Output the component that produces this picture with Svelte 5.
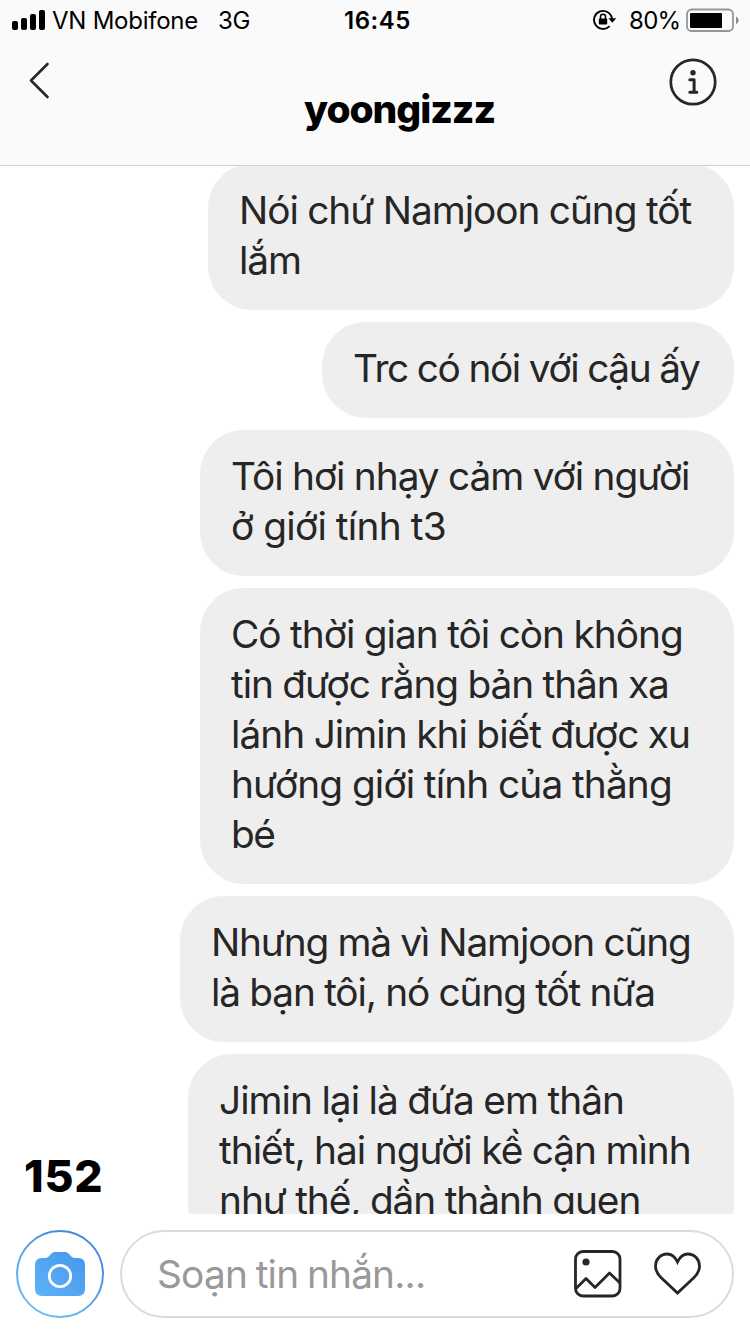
<script>
  const messages = [
    { width: 526, lines: [['Nói chứ Namjoon cũng tốt', -1.02], ['lắm', -1.1]] },
    { width: 412, lines: [['Trc có nói với cậu ấy', -1.4]] },
    { width: 534, lines: [['Tôi hơi nhạy cảm với người', -1.02], ['ở giới tính t3', -0.7]] },
    {
      width: 534,
      lines: [
        ['Có thời gian tôi còn không', -0.98],
        ['tin được rằng bản thân xa', -1.05],
        ['lánh Jimin khi biết được xu', -0.96],
        ['hướng giới tính của thằng', -0.84],
        ['bé', -1.4]
      ]
    },
    { width: 554, lines: [['Nhưng mà vì Namjoon cũng', -1.15], ['là bạn tôi, nó cũng tốt nữa', -1.1]] },
    {
      width: 546,
      lines: [
        ['Jimin lại là đứa em thân', -0.97],
        ['thiết, hai người kề cận mình', -0.98],
        ['như thế, dần thành quen', -1.03]
      ]
    }
  ];
</script>

<div class="screen">
  <header>
    <div class="status">
      <svg class="signal" width="34" height="20" viewBox="0 0 34 20">
        <rect x="0" y="11" width="6" height="9" rx="2" />
        <rect x="9" y="8" width="6" height="12" rx="2" />
        <rect x="18" y="4" width="6" height="16" rx="2" />
        <rect x="27" y="0" width="6" height="20" rx="2" />
      </svg>
      <span class="carrier">VN Mobifone</span>
      <span class="network">3G</span>
      <span class="time">16:45</span>
      <svg class="lock" width="24" height="22" viewBox="0 0 24 22">
        <path d="M19 10A9 9 0 1 0 16.6 17.1" fill="none" stroke="#000" stroke-width="1.9" />
        <path d="M15.4 9.3h7.8l-3.9 4.400z" />
        <rect x="5.800" y="9.500" width="8.400" height="6" rx="1" />
        <path d="M7.500 10V7.800a2.500 2.500 0 0 1 5 0v2.200" fill="none" stroke="#000" stroke-width="1.5" />
      </svg>
      <span class="percent">80%</span>
      <svg class="battery" width="54" height="24" viewBox="0 0 54 24">
        <rect x="1" y="1.500" width="46" height="21.500" rx="4.500" fill="none" stroke="#969696" stroke-width="1.8" />
        <rect x="4" y="5" width="32" height="15" rx="1" />
        <path d="M50 8.500c3.400 1.600 3.400 6 0 7.600z" fill="#8a8a8a" />
      </svg>
    </div>
    <div class="nav">
      <svg class="back" width="24" height="40" viewBox="0 0 24 40">
        <path d="M19.500 3L3 19.500L19.500 36" fill="none" stroke="#262626" stroke-width="2.6" stroke-linecap="round" stroke-linejoin="round" />
      </svg>
      <h1>yoongizzz</h1>
      <svg class="info" width="48" height="48" viewBox="0 0 48 48">
        <circle cx="24" cy="24" r="22.2" fill="none" stroke="#262626" stroke-width="2.7" />
        <circle cx="24" cy="14.8" r="2.7" fill="#262626" />
        <path d="M20.8 21.7h4.3v12.6M20.8 34.3h7" fill="none" stroke="#262626" stroke-width="3" stroke-linecap="round" stroke-linejoin="round" />
      </svg>
    </div>
  </header>

  <main>
    <div class="count">152</div>
    <div class="messages">
      {#each messages as message}
        <div class="bubble" style="width: {message.width}px">
          {#each message.lines as [text, spacing]}
            <div class="line" style="letter-spacing: {spacing}px">{text}</div>
          {/each}
        </div>
      {/each}
    </div>
  </main>

  <footer>
    <svg class="camera" width="88" height="88" viewBox="0 0 88 88">
      <defs>
        <linearGradient id="ring" x1="0.2" y1="1" x2="0.8" y2="0">
          <stop offset="0" stop-color="#70c0f5" />
          <stop offset="1" stop-color="#3f83dc" />
        </linearGradient>
        <linearGradient id="body" x1="0" y1="1" x2="1" y2="0">
          <stop offset="0" stop-color="#5eb3f8" />
          <stop offset="1" stop-color="#4596ec" />
        </linearGradient>
      </defs>
      <circle cx="44" cy="44" r="43" fill="#fff" stroke="url(#ring)" stroke-width="2" />
      <path
        d="M26 28h3c3 0 4-2 6-4s3-2 5-2h8c2 0 3 0 5 2s3 4 6 4h3q7 0 7 7v24q0 7-7 7H26q-7 0-7-7V35q0-7 7-7z"
        fill="url(#body)"
      />
      <circle cx="44" cy="46" r="10.7" fill="none" stroke="#fff" stroke-width="2.8" />
    </svg>
    <div class="composer">
      <span class="placeholder">Soạn tin nhắn...</span>
      <svg class="photo" width="48" height="48" viewBox="0 0 48 48">
        <rect x="1.5" y="1.5" width="44.5" height="44.5" rx="7.5" />
        <path d="M2 38.5L12 28.5L21 37.5L35.5 23L46 33" stroke-linejoin="round" />
        <circle cx="12" cy="12" r="3.6" class="dot" />
      </svg>
      <svg class="heart" width="48" height="44" viewBox="0 0 48 44">
        <path d="M23.5 10C20.8 4.300 17.500 2 13.200 2C6.500 2 1.500 7.400 1.500 14.300c0 5 2.300 8.200 6 11.800L23.500 41l16-14.900c3.700-3.600 6-6.800 6-11.800C45.500 7.400 40.500 2 33.800 2C29.500 2 26.200 4.300 23.500 10z" />
      </svg>
    </div>
  </footer>
</div>

<style>
  :global(body) {
    margin: 0;
    background: #fff;
  }

  .screen {
    display: flex;
    flex-direction: column;
    width: 750px;
    height: 1334px;
    overflow: hidden;
    background: #fff;
    color: #262626;
    font-family: Inter, 'Liberation Sans', sans-serif;
  }

  header {
    box-sizing: border-box;
    flex: none;
    height: 166px;
    background: #fafafa;
    border-bottom: 1px solid #d0d0d0;
  }

  .status {
    display: flex;
    align-items: center;
    height: 40px;
    color: #000;
    font-size: 24px;
    line-height: 38px;
    white-space: nowrap;
  }

  .status span {
    padding-top: 2px;
  }

  .status svg {
    flex: none;
  }

  .signal {
    margin-left: 12px;
  }

  .carrier {
    width: 166px;
    margin-left: 6px;
    letter-spacing: -0.25px;
  }

  .network {
    width: 126px;
    letter-spacing: -0.3px;
  }

  .time {
    width: 249px;
    font-weight: 600;
    letter-spacing: 0.5px;
  }

  .percent {
    width: 57px;
    margin-left: 12px;
    letter-spacing: -0.7px;
  }

  .nav {
    display: flex;
    align-items: flex-start;
    height: 125px;
  }

  .back {
    margin: 21px 0 0 28px;
  }

  h1 {
    width: 365px;
    margin: 46px 0 0 252px;
    color: #000;
    font-size: 39px;
    font-weight: 800;
    line-height: 46px;
    letter-spacing: -1.05px;
  }

  .info {
    margin-top: 18px;
  }

  main {
    display: flex;
    flex: none;
    justify-content: space-between;
    height: 1048px;
    overflow: hidden;
  }

  .count {
    align-self: flex-end;
    margin: 0 0 13px 24px;
    color: #000;
    font-size: 44.5px;
    font-weight: 800;
    line-height: 50px;
    letter-spacing: 0.8px;
  }

  .messages {
    display: flex;
    flex-direction: column;
    align-items: flex-end;
    gap: 12px;
    margin: -2px 16px 0 0;
  }

  .bubble {
    box-sizing: border-box;
    flex: none;
    padding: 21px 0 25px 31px;
    border-radius: 44px;
    background: #eee;
    font-size: 38.8px;
    word-spacing: -0.5px;
  }

  .line {
    line-height: 50px;
    white-space: nowrap;
  }

  footer {
    display: flex;
    flex: none;
    gap: 16px;
    box-sizing: border-box;
    height: 120px;
    padding: 16px;
  }

  .camera {
    flex: none;
  }

  .composer {
    display: flex;
    align-items: center;
    box-sizing: border-box;
    width: 614px;
    height: 88px;
    padding-left: 35px;
    border: 2px solid #dbdbdb;
    border-radius: 44px;
  }

  .placeholder {
    width: 417px;
    padding-bottom: 2px;
    color: #999;
    font-size: 38.8px;
    letter-spacing: -0.8px;
    word-spacing: -1.5px;
    white-space: nowrap;
  }

  .photo,
  .heart {
    flex: none;
    fill: none;
    stroke: #262626;
    stroke-width: 2.8;
  }

  .photo .dot {
    fill: #262626;
    stroke: none;
  }

  .heart {
    margin-left: 32px;
  }
</style>
